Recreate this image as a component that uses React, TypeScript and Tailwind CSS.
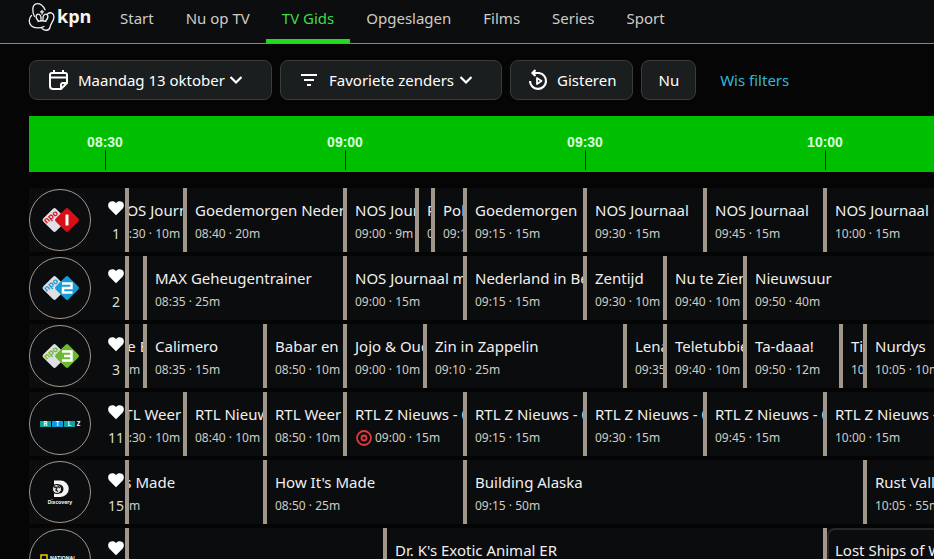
import type { ReactNode } from 'react';

const PX_PER_MINUTE = 8;
const GUIDE_START = 8 * 60 + 25;

type Program = { start: string; minutes: number; title: string; recording?: boolean; focused?: boolean };
type Channel = { number: number; name: string; logo: ReactNode; programs: Program[] };

const toMinutes = (time: string) => {
  const [hours, minutes] = time.split(':').map(Number);
  return hours * 60 + minutes;
};

function NpoLogo({ color, children }: { color: string; children: ReactNode }) {
  return (
    <svg width="60" height="60" viewBox="0 0 60 60" aria-hidden="true">
      <rect x="15.500" y="21" width="18" height="18" rx="2" fill="#dfe0e4" transform="rotate(45 24.500 30)" />
      <text
        x="21"
        y="29.500"
        fill={color}
        fontFamily="Inter, sans-serif"
        fontSize="8.500"
        fontWeight="700"
        textAnchor="middle"
        transform="rotate(-40 21 27)"
      >
        npo
      </text>
      <rect x="28" y="21" width="18" height="18" rx="2" fill={color} transform="rotate(45 37 30)" />
      {children}
    </svg>
  );
}

function RtlLogo() {
  return (
    <svg width="60" height="60" viewBox="0 0 60 60" aria-hidden="true">
      <rect x="10" y="27" width="11" height="6" fill="#12a3a0" />
      <rect x="22" y="27" width="11" height="6" fill="#0a9be0" />
      <rect x="34" y="27" width="11" height="6" fill="#12a3a0" />
      <g fontFamily="Inter, sans-serif" fontSize="6" fontWeight="800" fill="#e8f7f8" textAnchor="middle">
        <text x="15.500" y="32.200">R</text>
        <text x="27.500" y="32.200">T</text>
        <text x="39.500" y="32.200">L</text>
        <text x="48.500" y="32.200">Z</text>
      </g>
    </svg>
  );
}

function DiscoveryLogo() {
  return (
    <svg width="60" height="60" viewBox="0 0 60 60" aria-hidden="true">
      <path d="M24 18.500h6.500a8 8 0 0 1 0 16.500H24z" fill="#f4f4f4" />
      <path d="M24 22.500h5a4.500 4.500 0 0 1 0 9h-5z" fill="#0c0d0f" />
      <circle cx="27" cy="27" r="4.500" fill="#e6e6e6" stroke="#0c0d0f" />
      <path d="M24 25l3 .5-1 2.500 2 1.500M27.500 23.500l2.500 2.500" stroke="#222" strokeWidth="1.500" fill="none" />
      <text x="30" y="42" fill="#f4f4f4" fontFamily="Inter, sans-serif" fontSize="5" fontWeight="700" textAnchor="middle">
        Discovery
      </text>
    </svg>
  );
}

function NatGeoLogo() {
  return (
    <svg width="60" height="60" viewBox="0 0 60 60" aria-hidden="true">
      <rect x="11" y="25" width="6" height="9" fill="none" stroke="#f5c800" strokeWidth="1.500" />
      <g fill="#f4f4f4" fontFamily="Inter, sans-serif" fontSize="5" fontWeight="700">
        <text x="20" y="29.500">NATIONAL</text>
        <text x="20" y="35">GEOGRAPHIC</text>
      </g>
    </svg>
  );
}

const channels: Channel[] = [
  {
    number: 1,
    name: 'NPO 1',
    logo: (
      <NpoLogo color="#d70f18">
        <rect x="35.500" y="24.500" width="3" height="11" rx="0.500" fill="#fff" />
      </NpoLogo>
    ),
    programs: [
      { start: '08:30', minutes: 10, title: 'NOS Journaal' },
      { start: '08:40', minutes: 20, title: 'Goedemorgen Nederland' },
      { start: '09:00', minutes: 9, title: 'NOS Journaal' },
      { start: '09:09', minutes: 2, title: 'Politieke partijen' },
      { start: '09:11', minutes: 4, title: 'Politieke partijen' },
      { start: '09:15', minutes: 15, title: 'Goedemorgen' },
      { start: '09:30', minutes: 15, title: 'NOS Journaal' },
      { start: '09:45', minutes: 15, title: 'NOS Journaal' },
      { start: '10:00', minutes: 15, title: 'NOS Journaal' },
    ],
  },
  {
    number: 2,
    name: 'NPO 2',
    logo: (
      <NpoLogo color="#159bd7">
        <path d="M32 25.500h9.500v4.500h-8.500v4.500h9.500" fill="none" stroke="#fff" strokeWidth="2.500" />
      </NpoLogo>
    ),
    programs: [
      { start: '08:35', minutes: 25, title: 'MAX Geheugentrainer' },
      { start: '09:00', minutes: 15, title: 'NOS Journaal met gebaren' },
      { start: '09:15', minutes: 15, title: 'Nederland in Beweging' },
      { start: '09:30', minutes: 10, title: 'Zentijd' },
      { start: '09:40', minutes: 10, title: 'Nu te Zien' },
      { start: '09:50', minutes: 40, title: 'Nieuwsuur' },
    ],
  },
  {
    number: 3,
    name: 'NPO 3',
    logo: (
      <NpoLogo color="#6cb92d">
        <path d="M32 25.500h9.500v9H32M34 30h7.500" fill="none" stroke="#fff" strokeWidth="2.500" />
      </NpoLogo>
    ),
    programs: [
      { start: '08:25', minutes: 10, title: 'Beestige Boel' },
      { start: '08:35', minutes: 15, title: 'Calimero' },
      { start: '08:50', minutes: 10, title: 'Babar en de avonturen' },
      { start: '09:00', minutes: 10, title: 'Jojo & Oude Oma' },
      { start: '09:10', minutes: 25, title: 'Zin in Zappelin' },
      { start: '09:35', minutes: 5, title: 'Lena' },
      { start: '09:40', minutes: 10, title: 'Teletubbies' },
      { start: '09:50', minutes: 12, title: 'Ta-daaa!' },
      { start: '10:02', minutes: 3, title: 'Tik Tak' },
      { start: '10:05', minutes: 10, title: 'Nurdys' },
    ],
  },
  {
    number: 11,
    name: 'RTL Z',
    logo: <RtlLogo />,
    programs: [
      { start: '08:30', minutes: 10, title: 'RTL Weer' },
      { start: '08:40', minutes: 10, title: 'RTL Nieuws' },
      { start: '08:50', minutes: 10, title: 'RTL Weer' },
      { start: '09:00', minutes: 15, title: 'RTL Z Nieuws - 09:00', recording: true },
      { start: '09:15', minutes: 15, title: 'RTL Z Nieuws - 09:15' },
      { start: '09:30', minutes: 15, title: 'RTL Z Nieuws - 09:30' },
      { start: '09:45', minutes: 15, title: 'RTL Z Nieuws - 09:45' },
      { start: '10:00', minutes: 15, title: 'RTL Z Nieuws - 10:00' },
    ],
  },
  {
    number: 15,
    name: 'Discovery',
    logo: <DiscoveryLogo />,
    programs: [
      { start: '08:25', minutes: 25, title: "How It's Made" },
      { start: '08:50', minutes: 25, title: "How It's Made" },
      { start: '09:15', minutes: 50, title: 'Building Alaska' },
      { start: '10:05', minutes: 55, title: 'Rust Valley Restorers' },
    ],
  },
  {
    number: 16,
    name: 'National Geographic',
    logo: <NatGeoLogo />,
    programs: [
      { start: '09:05', minutes: 55, title: "Dr. K's Exotic Animal ER" },
      { start: '10:00', minutes: 60, title: 'Lost Ships of World War II', focused: true },
    ],
  },
];

const navItems = ['Start', 'Nu op TV', 'TV Gids', 'Opgeslagen', 'Films', 'Series', 'Sport'];
const hours = ['08:30', '09:00', '09:30', '10:00', '10:30'];

function KpnLogo() {
  return (
    <svg width="64" height="32" viewBox="0 0 64 32" role="img" aria-label="kpn">
      <g fill="none" stroke="#f2f2f2" strokeWidth="1.300" strokeLinecap="round">
        <path d="M6.500 16.500C4 12 4 5 8 3.800c4-1 7.500 2 9 6" />
        <path d="M3.500 15.500C.5 18 .5 23.500 3.500 26c3 2.500 8.500 2.500 12.500.5" />
        <path d="M19.500 14c3-2.500 6.500-1 6.500 3 0 4-4 7-4 10.500-1 3.500-5 3.500-8 1" />
        <path d="M10.500 21C6.500 17.500 8 13 11.500 14.500c1.500 1 1.700 3 1.500 5M17.500 21c4-3.500 2.500-8 -1-6.500-1.500 1-1.700 3-1.500 5M10 21.500q4-1.500 8 0M14 10.500v3.500M12.500 11.800h3" />
      </g>
      <text x="29" y="23" fill="#f4f4f4" fontFamily="Open Sans, sans-serif" fontSize="18" fontWeight="700">
        kpn
      </text>
    </svg>
  );
}

function Chevron() {
  return (
    <svg className="pointer-events-none -ml-5 shrink-0" width="14" height="10" viewBox="0 0 14 10" fill="none" stroke="#fff" strokeWidth="2.200" aria-hidden="true">
      <path d="M1.500 2l5.500 5.500L12.500 2" />
    </svg>
  );
}

function Filter({ icon, label, name }: { icon: ReactNode; label: string; name: string }) {
  return (
    <label className="flex h-10 shrink-0 items-center gap-2 rounded-lg border border-[#383c3d] bg-[#1a1e1f] pr-7 pl-[18px]">
      {icon}
      <select aria-label={name} className="appearance-none bg-transparent pr-4 text-white outline-none">
        <option>{label}</option>
      </select>
      <Chevron />
    </label>
  );
}

function ChannelCell({ channel }: { channel: Channel }) {
  return (
    <div className="relative z-10 flex w-[100px] shrink-0 items-start justify-between border-r-4 border-[#a1978a] bg-[#0b0c0e]">
      <div className="mt-px flex size-[62px] items-center justify-center overflow-hidden rounded-full border border-[#a1978a]" title={channel.name}>
        {channel.logo}
      </div>
      <div className="flex w-[18px] flex-col items-center pt-3">
        <button aria-label={`${channel.name} favoriet`}>
          <svg width="16" height="16" viewBox="0 0 16 16" fill="#fff" aria-hidden="true">
            <path d="M8 15.200 1.500 8.800C-.6 6.500-.1 3 2 1.800 4 .7 6.700 1 8 3.200 9.300 1 12 .7 14 1.800c2.100 1.200 2.600 4.700.5 7z" />
          </svg>
        </button>
        <span className="mt-1.5 text-sm leading-6 text-[#dddbd6]">{channel.number}</span>
      </div>
    </div>
  );
}

function ProgramCell({ program }: { program: Program }) {
  return (
    <li className="shrink-0 overflow-hidden border-l-4 border-[#a1978a] whitespace-nowrap" style={{ width: program.minutes * PX_PER_MINUTE }}>
      <div className={program.focused ? 'h-full rounded-lg border-2 border-[#25282a] px-1.5 pt-2' : 'px-2 pt-2.5'}>
        <h3 className="text-[15px] leading-6 text-[#f0f0ee]">{program.title}</h3>
        <p className="flex items-center text-xs leading-6 text-[#cfccc5]">
          {program.recording && (
            <svg className="mr-[3px] ml-px" width="16" height="16" viewBox="0 0 16 16" fill="none" stroke="#e2393f" strokeWidth="1.800" aria-label="Opname">
              <circle cx="8" cy="8" r="7" />
              <circle cx="8" cy="8" r="2.500" />
            </svg>
          )}
          {program.start} · {program.minutes}m
        </p>
      </div>
    </li>
  );
}

function ChannelRow({ channel }: { channel: Channel }) {
  const lead = toMinutes(channel.programs[0].start) - GUIDE_START;
  return (
    <section className="flex h-16 shrink-0 bg-[#0b0c0e]">
      <ChannelCell channel={channel} />
      <div className="min-w-0 flex-1 overflow-hidden">
        <ul className="-ml-[66px] flex h-full">
          <li className="shrink-0" style={{ width: lead * PX_PER_MINUTE }} />
          {channel.programs.map((program) => (
            <ProgramCell key={program.start} program={program} />
          ))}
        </ul>
      </div>
    </section>
  );
}

export default function App() {
  return (
    <div className="flex h-screen flex-col overflow-hidden bg-[#050505] font-['Noto_Sans',sans-serif] text-white">
      <header className="flex h-11 shrink-0 border-b border-[#8d857a] bg-[#0c0d0f] pl-7">
        <a href="#home" className="w-[76px] shrink-0">
          <KpnLogo />
        </a>
        <nav className="flex text-[15px]">
          {navItems.map((item) => (
            <a
              key={item}
              href="#nav"
              className={
                item === 'TV Gids'
                  ? 'border-b-4 border-[#1fdc1f] px-4 pt-1.5 leading-6 text-[#3fdc46]'
                  : 'px-4 pt-1.5 leading-6 text-[#d0ccc4]'
              }
            >
              {item}
            </a>
          ))}
        </nav>
      </header>

      <main className="flex flex-col pl-[29px]">
        <div className="flex gap-2 pt-4 pb-4 text-[15px]">
          <Filter
            name="Datum"
            label="Maandag 13 oktober"
            icon={
              <svg width="22" height="22" viewBox="0 0 22 22" fill="none" stroke="#fff" strokeWidth="2" aria-hidden="true">
                <path d="M13 20H5a3 3 0 0 1-3-3V6a2 2 0 0 1 2-2h13a2 2 0 0 1 2 2v8l-6 6zM2 8.500h17M6 1v4M15 1v4M13 20v-4a2 2 0 0 1 2-2h4" />
              </svg>
            }
          />
          <Filter
            name="Zenders"
            label="Favoriete zenders"
            icon={
              <svg width="22" height="22" viewBox="0 0 22 22" fill="none" stroke="#fff" strokeWidth="2" aria-hidden="true">
                <path d="M2 6h16M5 11h10M8 16h4" />
              </svg>
            }
          />
          <button className="flex h-10 shrink-0 items-center gap-2 rounded-lg border border-[#383c3d] bg-[#1a1e1f] px-4">
            <svg width="22" height="22" viewBox="0 0 22 22" fill="none" stroke="#fff" strokeWidth="2.200" aria-hidden="true">
              <path d="M6 4h6a8 8 0 1 1-9 8M8.500 1 5.500 4l3 3" />
              <path d="M10 9v6l4.500-3z" strokeWidth="1.800" strokeLinejoin="round" />
            </svg>
            Gisteren
          </button>
          <button className="h-10 shrink-0 rounded-lg border border-[#383c3d] bg-[#1a1e1f] px-4">Nu</button>
          <button className="ml-4 h-10 text-[#2fb9dc]">Wis filters</button>
        </div>

        <div className="h-14 shrink-0 overflow-hidden bg-[#00bf00]">
          <div className="-ml-11 flex">
            {hours.map((hour) => (
              <div key={hour} className="flex w-60 shrink-0 flex-col items-center pt-4 font-['Liberation_Sans',sans-serif] text-sm leading-5 font-bold text-[#dcffdc]">
                {hour}
                <span className="-mt-0.5 h-5 w-px bg-[#062006]" />
              </div>
            ))}
          </div>
        </div>

        <div className="mt-4 flex flex-col gap-1">
          {channels.map((channel) => (
            <ChannelRow key={channel.number} channel={channel} />
          ))}
        </div>
      </main>
    </div>
  );
}
